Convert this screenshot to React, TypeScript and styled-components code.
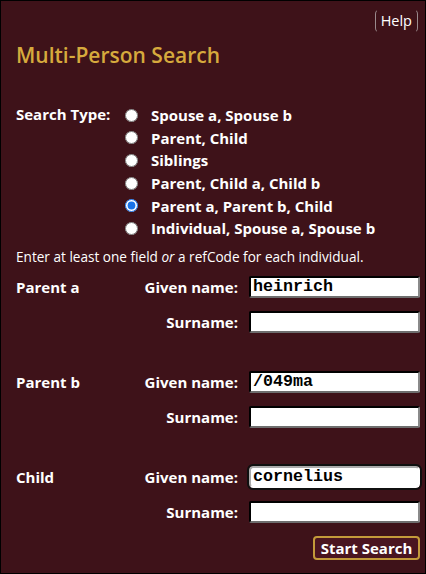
import React from "react";
import styled, { createGlobalStyle } from "styled-components";

const Global = createGlobalStyle`
  html, body { margin: 0; padding: 0; background: #3e1219; }
  body { font-family: "Open Sans", "Noto Sans", sans-serif; color: #fff; }
  * { box-sizing: border-box; }
`;

const Page = styled.div`
  width: 426px;
  height: 574px;
  border: 1px solid #000;
  background: #3e1219;
  padding: 8px 5px 0 15px;
  display: flex;
  flex-direction: column;
`;

const TopBar = styled.div`
  display: flex;
  justify-content: flex-end;
  padding-right: 2px;
`;

const HelpButton = styled.button`
  font-family: "Open Sans", sans-serif;
  font-size: 14.5px;
  color: #fff;
  background: transparent;
  border: 1px solid transparent;
  border-left-color: #9a8a8c;
  border-right-color: #9a8a8c;
  border-radius: 5px;
  height: 24px;
  padding: 0 5px;
  line-height: 20px;
  cursor: pointer;
`;

const Title = styled.h1`
  margin: 8px 0 0 0;
  font-size: 21px;
  font-weight: 600;
  color: #d6aa3d;
  line-height: 28px;
`;

const TypeGrid = styled.div`
  margin-top: 35px;
  display: grid;
  grid-template-columns: 107px 1fr;
`;

const FieldLabel = styled.span<{ $align?: string }>`
  font-weight: 700;
  font-size: 15px;
  line-height: 20px;
  text-align: ${(p) => p.$align || "left"};
  white-space: nowrap;
`;

const RadioList = styled.div`
  display: flex;
  flex-direction: column;
`;

const RadioRow = styled.label`
  display: flex;
  align-items: center;
  height: 22.6px;
  font-weight: 700;
  font-size: 15px;
  cursor: pointer;
`;

const Radio = styled.input`
  width: 13px;
  height: 13px;
  margin: 0 13px 0 2px;
  accent-color: #1a73e8;
`;

const Note = styled.p`
  margin: 8px 0 0 0;
  font-size: 13.6px;
  line-height: 18px;
`;

const PersonGrid = styled.div`
  margin-top: 10px;
  display: grid;
  grid-template-columns: 1fr auto 171px;
  column-gap: 11px;
  row-gap: 13px;
  align-items: center;
`;

const Spacer = styled.div`
  grid-column: 1 / -1;
  height: 25px;
  margin: -13px 0 0 0;
`;

const Cell = styled.div`
  height: 22px;
  display: flex;
  align-items: center;
`;

const TextBox = styled.input<{ $focused?: boolean }>`
  width: 171px;
  height: 22px;
  padding: 0 2px;
  border: 2px inset #767676;
  border-top-color: #2b2b2b;
  border-left-color: #3a3a3a;
  border-bottom-color: #6e6e6e;
  border-right-color: #8a8a8a;
  border-radius: 2px;
  background: #fff;
  color: #000;
  font-family: "Liberation Mono", "Courier New", monospace;
  font-weight: 700;
  font-size: 16.7px;
  outline: ${(p) => (p.$focused ? "2px solid #101010" : "none")};
  outline-offset: 0;
  ${(p) => (p.$focused ? "border-color: #fff; border-radius: 4px;" : "")}
`;

const ButtonRow = styled.div`
  grid-column: 1 / -1;
  display: flex;
  justify-content: flex-end;
`;

const SearchButton = styled.button`
  width: 107px;
  height: 24px;
  font-family: "Open Sans", sans-serif;
  font-weight: 700;
  font-size: 15px;
  line-height: 18px;
  color: #fff;
  background: #4a1520;
  border: 2px solid #c39a3a;
  border-radius: 4px;
  padding: 0;
  cursor: pointer;
`;

const types = [
  "Spouse a, Spouse b",
  "Parent, Child",
  "Siblings",
  "Parent, Child a, Child b",
  "Parent a, Parent b, Child",
  "Individual, Spouse a, Spouse b",
];

const people = [
  { label: "Parent a", given: "heinrich", focus: false },
  { label: "Parent b", given: "/049ma", focus: false },
  { label: "Child", given: "cornelius", focus: true },
];

export default function App() {
  return (
    <>
      <Global />
      <Page>
        <TopBar>
          <HelpButton>Help</HelpButton>
        </TopBar>
        <Title>Multi-Person Search</Title>
        <TypeGrid>
          <FieldLabel>Search Type:</FieldLabel>
          <RadioList>
            {types.map((t, i) => (
              <RadioRow key={t}>
                <Radio type="radio" name="stype" defaultChecked={i === 4} />
                {t}
              </RadioRow>
            ))}
          </RadioList>
        </TypeGrid>
        <Note>
          Enter at least one field <i>or</i> a refCode for each individual.
        </Note>
        <PersonGrid>
          {people.map((p, i) => (
            <React.Fragment key={p.label}>
              {i > 0 && <Spacer />}
              <FieldLabel>{p.label}</FieldLabel>
              <FieldLabel $align="right">Given name:</FieldLabel>
              <Cell>
                <TextBox defaultValue={p.given} $focused={p.focus} spellCheck={false} />
              </Cell>
              <span />
              <FieldLabel $align="right">Surname:</FieldLabel>
              <Cell>
                <TextBox defaultValue="" spellCheck={false} />
              </Cell>
            </React.Fragment>
          ))}
          <ButtonRow>
            <SearchButton>Start Search</SearchButton>
          </ButtonRow>
        </PersonGrid>
      </Page>
    </>
  );
}
